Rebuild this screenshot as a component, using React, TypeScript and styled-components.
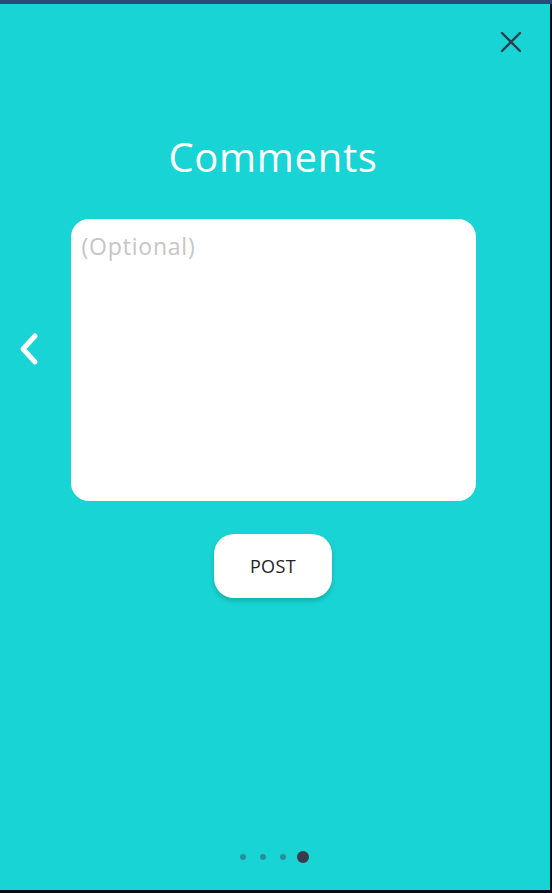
import React from "react";
import styled, { createGlobalStyle } from "styled-components";

const Global = createGlobalStyle`
  html, body { margin: 0; padding: 0; background: #000; }
  body { font-family: "Open Sans", "DejaVu Sans", sans-serif; }
  * { box-sizing: border-box; }
`;

const Frame = styled.div`
  width: 552px;
  height: 893px;
  background: #0b0b12;
  display: flex;
  flex-direction: column;
`;

const TopBar = styled.div`
  height: 4px;
  width: 552px;
  background: #2b4a78;
  flex-shrink: 0;
`;

const Panel = styled.div`
  width: 550px;
  height: 886px;
  padding-right: 4px;
  background: #19d4d4;
  position: relative;
  display: flex;
  flex-direction: column;
  align-items: center;
`;

const Close = styled.button`
  position: absolute;
  top: 24px;
  right: 25px;
  width: 28px;
  height: 28px;
  padding: 0;
  border: none;
  background: transparent;
  display: flex;
  align-items: center;
  justify-content: center;
`;

const Title = styled.h1`
  margin: 130px 0 0;
  font-family: "Open Sans", sans-serif;
  font-weight: 400;
  font-size: 40px;
  line-height: 46px;
  color: #fff;
  letter-spacing: 0.7px;
`;

const Row = styled.div`
  width: 100%;
  margin-top: 39px;
  display: flex;
  align-items: center;
  position: relative;
  justify-content: center;
`;

const Back = styled.button`
  position: absolute;
  left: 14px;
  top: 110px;
  width: 30px;
  height: 40px;
  padding: 0;
  border: none;
  background: transparent;
  display: flex;
  align-items: center;
  justify-content: center;
`;

const TextBox = styled.textarea`
  width: 405px;
  height: 282px;
  border: none;
  outline: none;
  resize: none;
  border-radius: 18px;
  background: #fff;
  padding: 12px 11px;
  font-family: "Open Sans", sans-serif;
  font-size: 23px;
  line-height: 30px;
  letter-spacing: 0.8px;
  color: #444;
  &::placeholder { color: #c6c6c6; }
`;

const PostButton = styled.button`
  margin-top: 33px;
  width: 118px;
  height: 64px;
  border: none;
  border-radius: 20px;
  background: #fff;
  box-shadow: 0 3px 5px rgba(0, 0, 0, 0.18);
  font-family: "Open Sans", sans-serif;
  font-size: 18px;
  color: #222;
  letter-spacing: 0.4px;
`;

const Dots = styled.div`
  position: absolute;
  bottom: 27px;
  left: 0;
  right: 0;
  padding-right: 2px;
  display: flex;
  justify-content: center;
  align-items: center;
  gap: 14px;
`;

const Dot = styled.span<{ $active?: boolean }>`
  width: ${(p) => (p.$active ? 12 : 6)}px;
  height: ${(p) => (p.$active ? 12 : 6)}px;
  margin-left: ${(p) => (p.$active ? -3 : 0)}px;
  border-radius: 50%;
  background: ${(p) => (p.$active ? "#3a3a4c" : "#2a8e9c")};
`;

export default function App() {
  return (
    <>
      <Global />
      <Frame>
        <TopBar />
        <Panel>
          <Close aria-label="close">
            <svg width="22" height="22" viewBox="0 0 22 22">
              <path d="M2 2 L20 20 M20 2 L2 20" stroke="#2c3e50" strokeWidth="2.4" strokeLinecap="round" />
            </svg>
          </Close>
          <Title>Comments</Title>
          <Row>
            <Back aria-label="back">
              <svg width="22" height="34" viewBox="0 0 22 34">
                <path d="M17 4 L5 17 L17 30" stroke="#fff" strokeWidth="5" fill="none" strokeLinecap="round" strokeLinejoin="round" />
              </svg>
            </Back>
            <TextBox placeholder="(Optional)" />
          </Row>
          <PostButton>POST</PostButton>
          <Dots>
            <Dot />
            <Dot />
            <Dot />
            <Dot $active />
          </Dots>
        </Panel>
      </Frame>
    </>
  );
}
